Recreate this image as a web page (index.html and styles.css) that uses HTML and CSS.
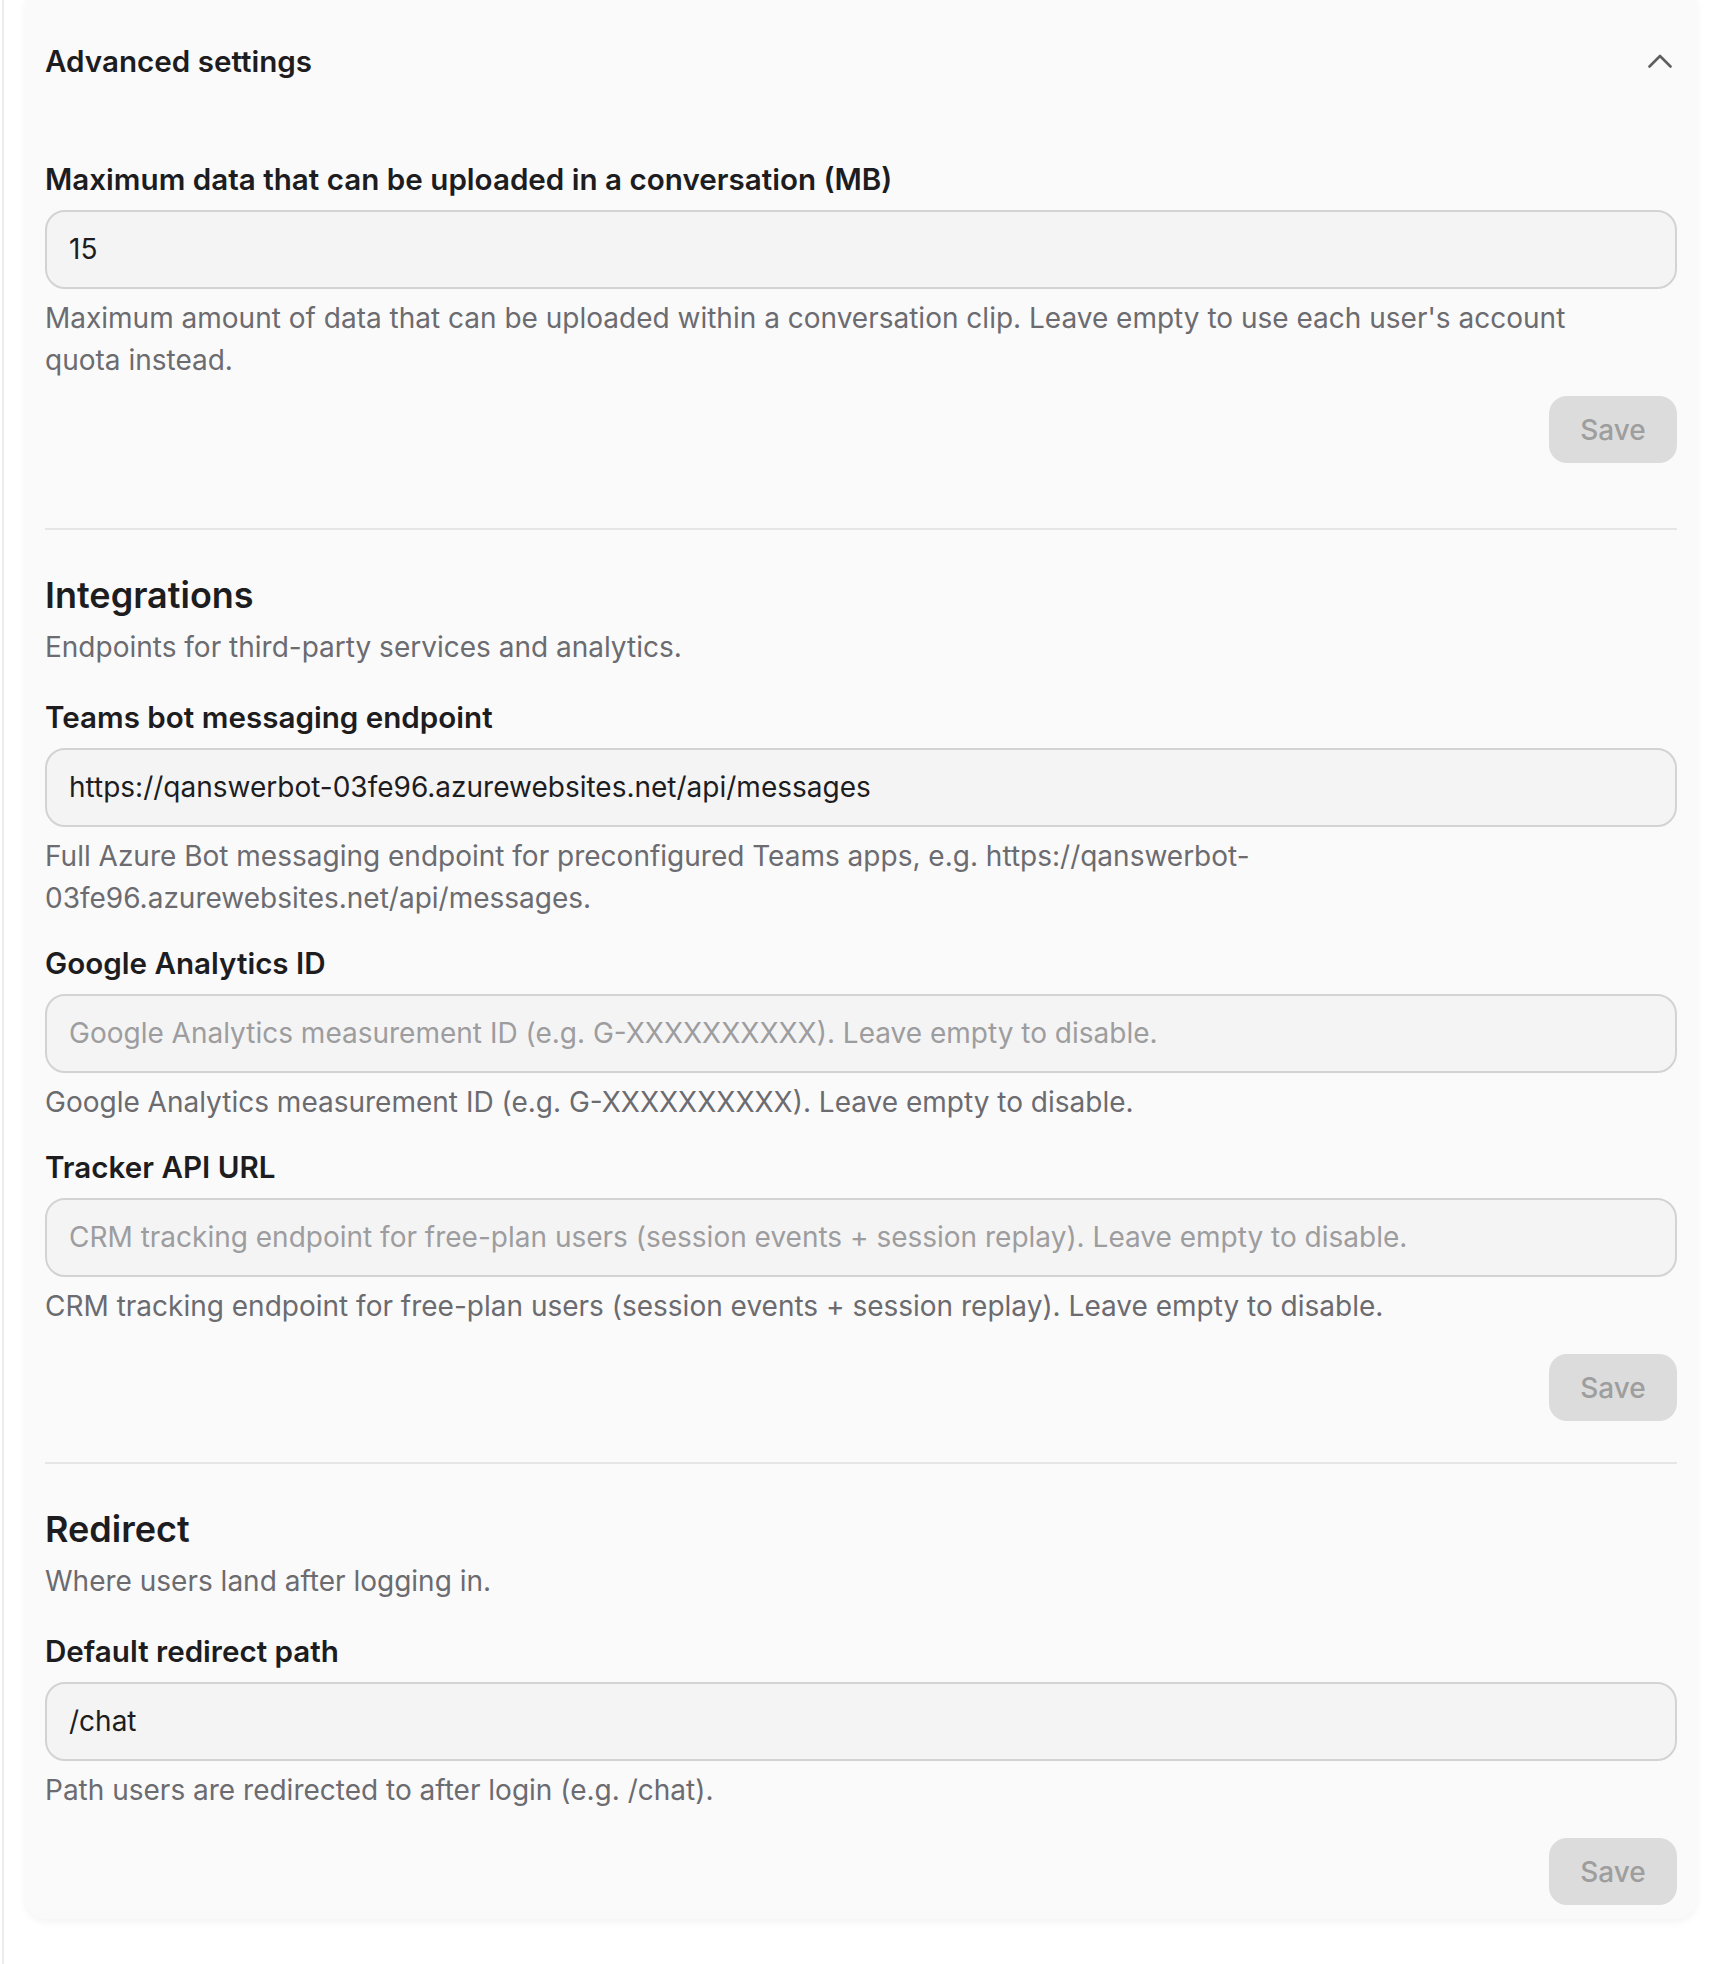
FILE: index.html
```html
<!DOCTYPE html>
<html lang="en">
<head>
<meta charset="utf-8">
<title>Advanced settings</title>
<link rel="stylesheet" href="styles.css">
</head>
<body>
<div class="page">
  <div class="card">
    <div class="card-header">
      <h2 class="card-title">Advanced settings</h2>
      <svg class="chevron" width="24" height="14" viewBox="0 0 24 14" aria-hidden="true">
        <polyline points="1.5,12.5 12,2 22.5,12.5" fill="none" stroke="#5f5f5f" stroke-width="2.6" stroke-linecap="round" stroke-linejoin="round"/>
      </svg>
    </div>

    <section class="section section-first">
      <div class="field">
        <label class="label">Maximum data that can be uploaded in a conversation (MB)</label>
        <div class="input">15</div>
        <p class="help help-narrow">Maximum amount of data that can be uploaded within a conversation clip. Leave empty to use each user's account quota instead.</p>
      </div>
      <div class="actions actions-first"><button class="btn">Save</button></div>
    </section>

    <hr class="divider divider-first">

    <section class="section">
      <h3 class="section-title">Integrations</h3>
      <p class="section-desc">Endpoints for third-party services and analytics.</p>
      <div class="field">
        <label class="label">Teams bot messaging endpoint</label>
        <div class="input">https://qanswerbot-03fe96.azurewebsites.net/api/messages</div>
        <p class="help help-url">Full Azure Bot messaging endpoint for preconfigured Teams apps, e.g. https://qanswerbot-03fe96.azurewebsites.net/api/messages.</p>
      </div>
      <div class="field">
        <label class="label">Google Analytics ID</label>
        <div class="input placeholder">Google Analytics measurement ID (e.g. G-XXXXXXXXXX). Leave empty to disable.</div>
        <p class="help">Google Analytics measurement ID (e.g. G-XXXXXXXXXX). Leave empty to disable.</p>
      </div>
      <div class="field">
        <label class="label">Tracker API URL</label>
        <div class="input placeholder">CRM tracking endpoint for free-plan users (session events + session replay). Leave empty to disable.</div>
        <p class="help">CRM tracking endpoint for free-plan users (session events + session replay). Leave empty to disable.</p>
      </div>
      <div class="actions"><button class="btn">Save</button></div>
    </section>

    <hr class="divider">

    <section class="section">
      <h3 class="section-title">Redirect</h3>
      <p class="section-desc">Where users land after logging in.</p>
      <div class="field">
        <label class="label">Default redirect path</label>
        <div class="input">/chat</div>
        <p class="help">Path users are redirected to after login (e.g. /chat).</p>
      </div>
      <div class="actions actions-last"><button class="btn">Save</button></div>
    </section>
  </div>
</div>
</body>
</html>
```

FILE: styles.css
```css
* { box-sizing: border-box; }

html, body {
  margin: 0;
  padding: 0;
  background: #ffffff;
}

body {
  font-family: Inter, "Noto Sans", "Liberation Sans", sans-serif;
  color: #1d1d1f;
  font-size: 28px;
  line-height: 42px;
}

.page {
  margin-left: 2px;
  border-left: 2px solid #ececec;
  padding: 0 21px 42px 21px;
  min-height: 1964px;
}

.card {
  background: #fafafa;
  border-radius: 0 0 22px 22px;
  box-shadow: 0 3px 8px rgba(0, 0, 0, 0.05);
  padding: 40px 20px 14px 20px;
}

.card-header {
  display: flex;
  align-items: center;
  justify-content: space-between;
}

.card-title {
  margin: 0;
  font-size: 29.6px;
  line-height: 42px;
  font-weight: 600;
  color: #1d1d1f;
}

.chevron {
  margin-right: 5px;
  display: block;
}

.section {
  display: flex;
  flex-direction: column;
}

.section-first {
  margin-top: 76px;
}

.section-title {
  margin: 0;
  font-size: 36px;
  line-height: 48px;
  font-weight: 600;
  color: #1d1d1f;
}

.section-desc {
  margin: 7px 0 28px 0;
  color: #6b6b70;
}

.field {
  display: flex;
  flex-direction: column;
}

.field + .field {
  margin-top: 23px;
}

.label {
  font-size: 29.6px;
  font-weight: 600;
  color: #1d1d1f;
}

.input {
  margin-top: 10px;
  height: 79px;
  border: 2px solid #d3d3d3;
  border-radius: 20px;
  background: #f4f4f4;
  padding: 16px 22px;
  line-height: 43px;
  color: #1d1d1f;
  white-space: nowrap;
  overflow: hidden;
}

.input.placeholder {
  color: #9d9d9f;
}

.help {
  margin: 8px 0 0 0;
  color: #6b6b70;
}

.help-narrow {
  max-width: 1560px;
}

.help-url {
  max-width: 1300px;
}

.actions {
  display: flex;
  justify-content: flex-end;
  margin-top: 27px;
}

.actions-first {
  margin-top: 15px;
}

.btn {
  font-family: inherit;
  font-size: 28px;
  line-height: 42px;
  font-weight: 500;
  width: 128px;
  height: 67px;
  border: none;
  border-radius: 18px;
  background: #dcdcdc;
  color: #9e9e9e;
  padding: 0;
}

.divider {
  border: none;
  height: 2px;
  background: #e6e6e6;
  margin: 41px 0 41px 0;
}

.divider-first {
  margin-top: 65px;
}
```
